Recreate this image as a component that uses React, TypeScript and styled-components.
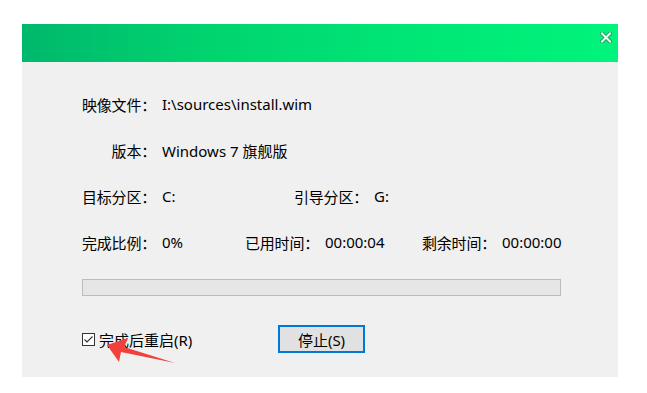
import React from 'react';
import styled, { createGlobalStyle } from 'styled-components';

const GlobalStyle = createGlobalStyle`
  html, body {
    margin: 0;
    padding: 0;
    background: #ffffff;
  }
  body {
    font-family: "Noto Sans", "Noto Sans CJK SC", sans-serif;
    color: #000000;
  }
`;

const Page = styled.div`
  padding: 24px 0 0 22px;
  width: 647px;
  height: 393px;
  box-sizing: border-box;
`;

const Dialog = styled.div`
  width: 596px;
  display: flex;
  flex-direction: column;
`;

const Header = styled.div`
  height: 38px;
  background: linear-gradient(90deg, #00b86c 0%, #00d36f 30%, #00e676 65%, #00f47b 100%);
  display: flex;
  justify-content: flex-end;
  align-items: flex-start;
`;

const CloseButton = styled.div`
  width: 24px;
  height: 20px;
  margin: 3px 0 0 0;
  display: flex;
  align-items: center;
  justify-content: center;
`;

const Body = styled.div`
  position: relative;
  height: 315px;
  background: #f0f0f0;
  padding: 32px 0 0 60px;
  box-sizing: border-box;
  display: flex;
  flex-direction: column;
`;

const Row = styled.div`
  display: flex;
  align-items: center;
  height: 20px;
  margin-bottom: 26px;
  font-size: 15px;
`;

const Field = styled.div<{ $width?: number }>`
  display: flex;
  align-items: center;
  width: ${p => (p.$width ? `${p.$width}px` : 'auto')};
  flex: none;
  white-space: nowrap;
`;

const Label = styled.span`
  width: 80px;
  flex: none;
  text-align: right;
  padding-right: 6px;
  box-sizing: border-box;
  letter-spacing: -0.2px;
`;

const Value = styled.span`
  white-space: nowrap;
`;

const Progress = styled.div`
  width: 479px;
  height: 17px;
  margin-top: 1px;
  background: #e6e6e6;
  border: 1px solid #bcbcbc;
  box-sizing: border-box;
`;

const Footer = styled.div`
  display: flex;
  align-items: center;
  margin-top: 29px;
  font-size: 15px;
`;

const CheckRow = styled.label`
  display: flex;
  align-items: center;
  gap: 4px;
  width: 196px;
  flex: none;
`;

const CheckBox = styled.span`
  width: 13px;
  height: 13px;
  border: 1px solid #333333;
  background: #ffffff;
  box-sizing: border-box;
  display: flex;
  align-items: center;
  justify-content: center;
`;

const StopButton = styled.button`
  width: 87px;
  height: 28px;
  background: #e1e1e1;
  border: 2px solid #0078d7;
  font-family: inherit;
  font-size: 15px;
  color: #000000;
  padding: 0;
`;

const Arrow = styled.svg`
  position: absolute;
  left: 0;
  top: 0;
  pointer-events: none;
`;

const fieldRows: { label: string; value: string; width?: number }[][] = [
  [{ label: '映像文件：', value: 'I:\\sources\\install.wim' }],
  [{ label: '版本：', value: 'Windows 7 旗舰版' }],
  [
    { label: '目标分区：', value: 'C:', width: 212 },
    { label: '引导分区：', value: 'G:' },
  ],
  [
    { label: '完成比例：', value: '0%', width: 163 },
    { label: '已用时间：', value: '00:00:04', width: 177 },
    { label: '剩余时间：', value: '00:00:00' },
  ],
];

export default function App() {
  return (
    <Page>
      <GlobalStyle />
      <Dialog>
        <Header>
          <CloseButton>
            <svg width="12" height="11" viewBox="0 0 12 11">
              <path d="M2 1.5 L10 9.5 M10 1.5 L2 9.5" stroke="#1aa35c" strokeWidth="4" strokeLinecap="square" />
              <path d="M2 1.5 L10 9.5 M10 1.5 L2 9.5" stroke="#eafff3" strokeWidth="2" strokeLinecap="square" />
            </svg>
          </CloseButton>
        </Header>
        <Body>
          {fieldRows.map((row, i) => (
            <Row key={i}>
              {row.map(f => (
                <Field key={f.label} $width={f.width}>
                  <Label>{f.label}</Label>
                  <Value>{f.value}</Value>
                </Field>
              ))}
            </Row>
          ))}
          <Progress />
          <Footer>
            <CheckRow>
              <CheckBox>
                <svg width="11" height="11" viewBox="0 0 11 11">
                  <path d="M1.5 5.5 L4 8 L9.5 2.5" fill="none" stroke="#333" strokeWidth="1.1" />
                </svg>
              </CheckBox>
              <span>完成后重启(R)</span>
            </CheckRow>
            <StopButton>停止(S)</StopButton>
          </Footer>
          <Arrow width="596" height="315" viewBox="0 0 596 315">
            <polygon
              points="85,283 106,276 102,285 153,301 99,290 97,300"
              fill="#f2403c"
            />
          </Arrow>
        </Body>
      </Dialog>
    </Page>
  );
}
